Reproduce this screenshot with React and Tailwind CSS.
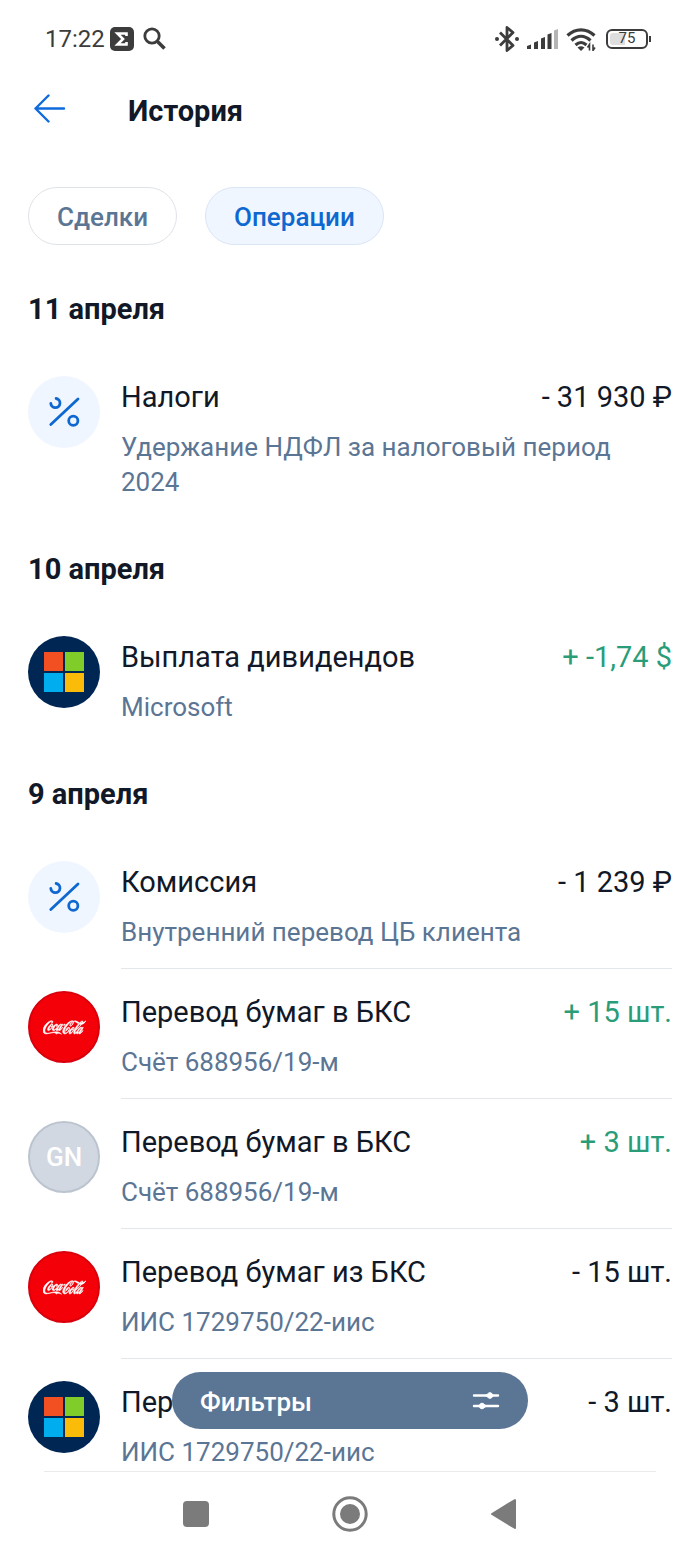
import { SiCocacola } from 'react-icons/si';

const sections = [
  {
    date: '11 апреля',
    items: [
      {
        logo: 'percent',
        title: 'Налоги',
        note: 'Удержание НДФЛ за налоговый период 2024',
        amount: '- 31 930 ₽',
      },
    ],
  },
  {
    date: '10 апреля',
    items: [
      { logo: 'microsoft', title: 'Выплата дивидендов', note: 'Microsoft', amount: '+ -1,74 $', income: true },
    ],
  },
  {
    date: '9 апреля',
    items: [
      { logo: 'percent', title: 'Комиссия', note: 'Внутренний перевод ЦБ клиента', amount: '- 1 239 ₽' },
      { logo: 'cola', title: 'Перевод бумаг в БКС', note: 'Счёт 688956/19-м', amount: '+ 15 шт.', income: true },
      { logo: 'gn', title: 'Перевод бумаг в БКС', note: 'Счёт 688956/19-м', amount: '+ 3 шт.', income: true },
      { logo: 'cola', title: 'Перевод бумаг из БКС', note: 'ИИС 1729750/22-иис', amount: '- 15 шт.' },
      { logo: 'microsoft', title: 'Перевод бумаг из БКС', note: 'ИИС 1729750/22-иис', amount: '- 3 шт.' },
    ],
  },
];

function StatusBar() {
  return (
    <div className="flex h-[77px] items-center justify-between pl-[45px] pr-[49px] text-[#3c3c3c]">
      <div className="flex items-center">
        <span className="text-[24px] leading-[28px]">17:22</span>
        <svg className="ml-[5px]" width="24" height="24" viewBox="0 0 24 24" aria-hidden="true">
          <rect width="24" height="24" rx="5" fill="currentColor" />
          <path d="M16.500 9V6.500H7.500l5.500 5.500-5.500 5.500h9V15" fill="none" stroke="#fff" strokeWidth="2.600" />
        </svg>
        <svg className="ml-[9px]" width="24" height="24" viewBox="0 0 24 24" fill="none" stroke="currentColor" aria-hidden="true">
          <circle cx="9" cy="9" r="7.200" strokeWidth="2.800" />
          <path d="M14.500 14.500l7 7" strokeWidth="3.600" />
        </svg>
      </div>
      <div className="flex items-center">
        <svg width="24" height="26" viewBox="0 0 24 26" fill="none" stroke="currentColor" strokeWidth="2.800" strokeLinejoin="round" aria-hidden="true">
          <path d="M5 6.500l13 13-6 5V1.500l6 5-13 13" />
          <circle cx="2" cy="13" r="2" fill="currentColor" stroke="none" />
          <circle cx="22" cy="13" r="2" fill="currentColor" stroke="none" />
        </svg>
        <svg className="ml-2" width="31" height="20" viewBox="0 0 31 20" fill="currentColor" aria-hidden="true">
          <path d="M0 17l4-1.500V20H0zM7 13.500l4-1.500v8H7zM14 9.500L18 8v12h-4zM20.500 5.500l4-1.500v16h-4z" />
          <path d="M27 1.500L31 0v20h-4z" fill="#b4b4b4" />
        </svg>
        <svg className="ml-2" width="30" height="24" viewBox="0 0 30 24" fill="none" stroke="currentColor" aria-hidden="true">
          <path d="M1.500 8.500c8-7.500 19-7.500 27 0M5.500 13.500c6-5.500 13-5.500 19 0M9.500 18c4-3.500 7-3.500 11 0" strokeWidth="3.200" />
          <path d="M11.500 20.500c2.500-1.800 4.500-1.800 7 0L15 24z" fill="currentColor" stroke="none" />
          <path d="M23.500 23.500v-6l-2 3M27 17.500v6l2-3" strokeWidth="1.600" />
        </svg>
        <div className="ml-[10px] flex items-center">
          <div className="flex h-5 w-[42px] rounded-[6px] border-2 border-[#3c3c3c] p-[2px]">
            <div className="flex w-full items-center justify-center rounded-[3px] bg-linear-to-r from-[#dedede] from-45% to-white to-45% text-[15px] leading-[15px]">
              75
            </div>
          </div>
          <div className="ml-px h-[6px] w-[2px] bg-[#3c3c3c]" />
        </div>
      </div>
    </div>
  );
}

function Logo({ type }) {
  if (type === 'cola') {
    return (
      <div className="flex size-[72px] shrink-0 items-center justify-center rounded-full border-2 border-[#d9000c] bg-[#f40009] text-white">
        <SiCocacola size={43} stroke="currentColor" strokeWidth="0.3" aria-label="Coca-Cola" />
      </div>
    );
  }
  if (type === 'gn') {
    return (
      <div className="flex size-[72px] shrink-0 items-center justify-center rounded-full border-2 border-[#bcc4cf] bg-[#d1d8e2] text-[26px] font-medium text-white">
        GN
      </div>
    );
  }
  if (type === 'microsoft') {
    return (
      <div className="flex size-[72px] shrink-0 items-center justify-center rounded-full bg-[#002654]">
        <div className="grid grid-cols-2 gap-[2px]">
          <div className="size-[19px] bg-[#f25022]" />
          <div className="size-[19px] bg-[#80cc28]" />
          <div className="size-[19px] bg-[#00adef]" />
          <div className="size-[19px] bg-[#fbbc09]" />
        </div>
      </div>
    );
  }
  return (
    <div className="size-[72px] shrink-0 rounded-full bg-[#f0f6ff]">
      <svg viewBox="0 0 72 72" fill="none" stroke="#0f68d0" strokeWidth="2.800" strokeLinecap="round" aria-hidden="true">
        <path d="M50 23L22.800 48.500" />
        <path d="M22.800 27.500a4.600 4.600 0 1 0 5.300-5" />
        <circle cx="45.300" cy="44.700" r="4.600" />
      </svg>
    </div>
  );
}

function Operation({ item }) {
  return (
    <li className="group flex gap-[21px] pt-[22px]">
      <Logo type={item.logo} />
      <div className="min-w-0 grow border-b border-[#e3e7eb] pt-[3px] pb-[18px] group-last:border-b-0 group-last:pb-0">
        <div className="flex justify-between text-[29px] leading-[36px]">
          <h3>{item.title}</h3>
          <span className={item.income ? 'text-[#2a9d78]' : ''}>{item.amount}</span>
        </div>
        <p className="mt-[15px] pr-10 text-[26px] leading-[35px] text-[#5b7594]">{item.note}</p>
      </div>
    </li>
  );
}

export default function App() {
  return (
    <div className="flex min-h-screen flex-col bg-white font-['Roboto',sans-serif] text-[#111827]">
      <StatusBar />

      <header className="flex h-[68px] items-center pl-[34px]">
        <button type="button" aria-label="Назад" className="cursor-pointer pb-1">
          <svg width="32" height="30" viewBox="0 0 32 30" fill="none" stroke="#0f6bdc" strokeWidth="2.400" strokeLinecap="round" strokeLinejoin="round" aria-hidden="true">
            <path d="M14.500 1.500L1.500 14.500l13 13M1.500 14.500H30" />
          </svg>
        </button>
        <h1 className="ml-[62px] text-[29px] leading-[36px] font-bold">История</h1>
      </header>

      <main className="px-7">
        <div className="mt-[42px] flex gap-7">
          <button type="button" className="h-[58px] cursor-pointer rounded-full border border-[#dfe3e8] px-7 pt-[3px] text-[26px] font-medium text-[#5b7594]">
            Сделки
          </button>
          <button type="button" className="h-[58px] cursor-pointer rounded-full border border-[#d9e6f5] bg-[#f0f6ff] px-7 pt-[3px] text-[26px] font-medium text-[#0f68d0]">
            Операции
          </button>
        </div>

        <div className="mt-[46px] space-y-[51px]">
          {sections.map((section) => (
            <section key={section.date}>
              <h2 className="mb-[27px] text-[29px] leading-[36px] font-bold">{section.date}</h2>
              <ul>
                {section.items.map((item, i) => (
                  <Operation key={i} item={item} />
                ))}
              </ul>
            </section>
          ))}
        </div>
      </main>

      <footer className="sticky bottom-0 mt-auto bg-white">
        <button
          type="button"
          className="absolute bottom-full left-1/2 mb-[42px] flex h-[57px] w-[356px] -translate-x-1/2 cursor-pointer items-center justify-between rounded-full bg-[#5b7594] px-7 text-[26px] font-medium text-white"
        >
          <span className="pt-[3px]">Фильтры</span>
          <svg width="28" height="24" viewBox="0 0 28 24" stroke="#fff" strokeWidth="2.400" strokeLinecap="round" fill="#fff" aria-hidden="true">
            <path d="M2 6.500h24M2 17h24" />
            <path d="M12.500 6.500c3 0 3-2.800 5.500-2.800s2.800 2.800 2.800 2.800-.3 2.800-2.800 2.800-2.500-2.800-5.500-2.800zM15.500 17c-3 0-3-2.800-5.500-2.800S7.200 17 7.200 17s.3 2.800 2.800 2.800 2.500-2.800 5.500-2.800z" strokeWidth="1" />
          </svg>
        </button>
        <nav className="mx-11 flex h-[85px] items-center justify-center gap-[122px] border-t border-[#e8eaec] text-[#7b7b7b]">
          <button type="button" aria-label="Недавние" className="cursor-pointer">
            <svg width="28" height="36" viewBox="0 0 28 36" fill="currentColor" aria-hidden="true">
              <rect x="1" y="5" width="26" height="26" rx="4" />
            </svg>
          </button>
          <button type="button" aria-label="Домой" className="cursor-pointer">
            <svg width="36" height="36" viewBox="0 0 36 36" aria-hidden="true">
              <circle cx="18" cy="18" r="16.200" fill="none" stroke="currentColor" strokeWidth="3" />
              <circle cx="18" cy="18" r="10" fill="currentColor" />
            </svg>
          </button>
          <button type="button" aria-label="Назад в системе" className="cursor-pointer">
            <svg width="28" height="36" viewBox="0 0 28 36" fill="currentColor" stroke="currentColor" strokeWidth="2" strokeLinejoin="round" aria-hidden="true">
              <path d="M25 4v28L2 18z" />
            </svg>
          </button>
        </nav>
      </footer>
    </div>
  );
}
